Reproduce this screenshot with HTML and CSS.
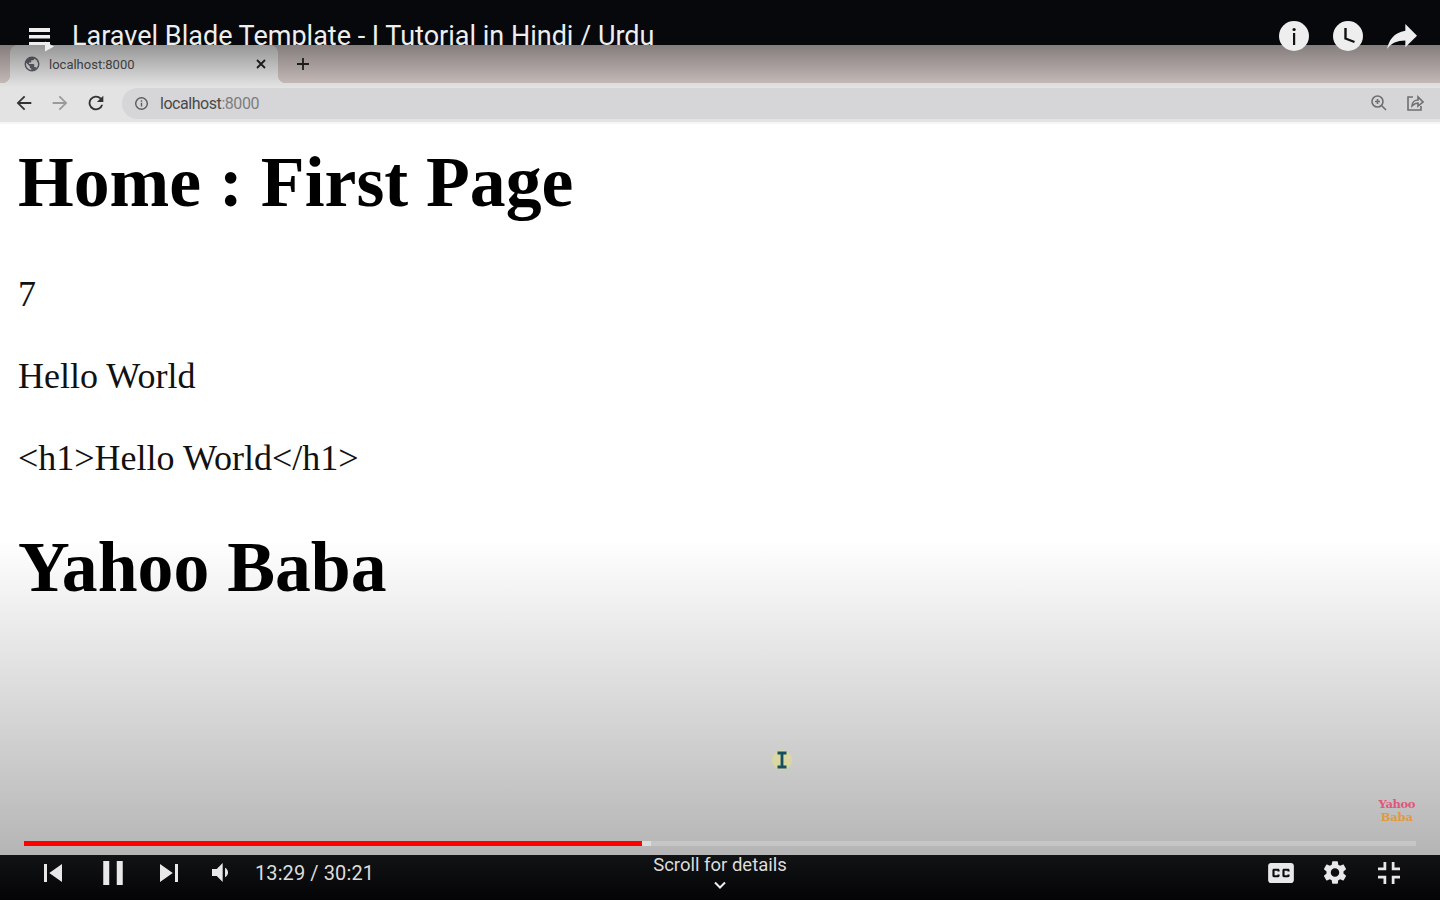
FILE: index.html
```html
<!DOCTYPE html>
<html lang="en">
<head>
    <meta charset="UTF-8">
    <meta name="viewport" content="width=device-width, initial-scale=1.0">
    <title>Laravel Blade Template</title>
    <link rel="stylesheet" href="styles.css">
</head>
<body>
    <header class="top-bar">
        <div class="video-title">Laravel Blade Template - I Tutorial in Hindi / Urdu</div>
    </header>

    <main class="video">
        <!-- browser window inside the video -->
        <div class="tab-strip">
            <div class="tab">
                <svg class="tab-globe" viewBox="0 0 24 24"><path d="M12 2a10 10 0 1 0 0 20 10 10 0 0 0 0-20zM11 19.900A8 8 0 0 1 4.200 10.200L9 15v1c0 1.100.9 2 2 2v1.900zm6.900-2.500c-.3-.8-1-1.400-1.900-1.400h-1v-3c0-.6-.4-1-1-1H8v-2h2c.6 0 1-.4 1-1V7h2c1.100 0 2-.9 2-2v-.4a8 8 0 0 1 2.900 12.800z"/></svg>
                <span class="tab-label">localhost:8000</span>
                <svg class="tab-close" viewBox="0 0 12 12"><path d="M2 2l8 8M10 2l-8 8"/></svg>
            </div>
            <svg class="tab-new" viewBox="0 0 14 14"><path d="M7 1v12M1 7h12"/></svg>
        </div>
        <div class="toolbar">
            <svg class="nav-icon" viewBox="0 0 24 24"><path d="M20 11H7.800l5.600-5.600L12 4l-8 8 8 8 1.400-1.400L7.800 13H20z"/></svg>
            <svg class="nav-icon nav-off" viewBox="0 0 24 24"><path d="M4 11h12.200l-5.600-5.600L12 4l8 8-8 8-1.400-1.400 5.600-5.600H4z"/></svg>
            <svg class="nav-icon" viewBox="0 0 24 24"><path d="M17.650 6.350A8 8 0 1 0 19.730 14h-2.080a6 6 0 1 1-1.410-6.240L13 11h7V4z"/></svg>
            <div class="address-bar">
                <svg class="address-info" viewBox="0 0 16 16"><circle cx="8" cy="8" r="6.200"/><path d="M8 7.200v4M8 4.600v1.400"/></svg>
                <span class="address-host">localhost<span class="address-port">:8000</span></span>
                <svg class="address-zoom" viewBox="0 0 18 18"><circle cx="7.500" cy="7.500" r="5.500"/><path d="M11.500 11.500L16 16M5 7.500h5M7.500 5v5"/></svg>
                <svg class="address-share" viewBox="0 0 18 18"><path d="M7 3H2v13h13v-4"/><path d="M6 12c0-4 3-6 6-6V3l5 5-5 4V9c-3 0-4 1-6 3z"/></svg>
            </div>
        </div>

        <div class="page">
            <h1>Home : First Page</h1>
            <p>7</p>
            <p>Hello World</p>
            <p>&lt;h1&gt;Hello World&lt;/h1&gt;</p>
            <h1>Yahoo Baba</h1>
        </div>

        <!-- player overlays -->
        <div class="shade-top"></div>
        <div class="shade-bottom"></div>

        <svg class="menu-icon" viewBox="0 0 25 24"><path d="M0 0h21v4H0zM0 7h21v3.500H0zM0 14h21v3H0z"/><path d="M16 13.500l9 5-9 5z"/></svg>
        <div class="top-actions">
            <svg class="top-icon" viewBox="0 0 30 30"><circle class="disc" cx="15" cy="15" r="15"/><path class="mark" d="M14 12h2.200v12H14z"/><circle class="mark" cx="15.100" cy="8.500" r="1.600"/></svg>
            <svg class="top-icon" viewBox="0 0 30 30"><circle class="disc" cx="15" cy="15" r="15"/><path class="hand" d="M12.500 7v10.500l9 3.500"/></svg>
            <svg class="top-share" viewBox="3 4 18 15"><path d="M21 11l-7-7v4C7 9 4 14 3 19c2.500-3.500 6-5.100 11-5.100V18l7-7z"/></svg>
        </div>

        <svg class="text-cursor" viewBox="0 0 20 20"><circle class="halo" cx="10" cy="10" r="10"/><path class="beam" d="M5.500 3h9M5.500 17h9M10 3v14"/></svg>

        <div class="watermark">
            <span class="mark-top">Yahoo</span>
            <span class="mark-bottom">Baba</span>
        </div>

        <div class="progress">
            <div class="progress-played"></div>
            <div class="progress-buffer"></div>
        </div>
    </main>

    <footer class="controls">
        <div class="controls-left">
            <svg class="ctl ctl-prev" viewBox="12 12 12 12"><path d="M12 12h2v12h-2zM15.500 18l8.500 6V12z"/></svg>
            <svg class="ctl ctl-pause" viewBox="12 10 13 16"><path d="M12 26h4V10h-4zM21 10v16h4V10z"/></svg>
            <svg class="ctl ctl-next" viewBox="12 12 12 12"><path d="M12 24l8.500-6L12 12zM22 12v12h2V12z"/></svg>
            <svg class="ctl ctl-volume" viewBox="8 10 13.500 16"><path d="M8 21h4l5 5V10l-5 5H8zM19 14v8c1.480-.68 2.500-2.230 2.500-4 0-1.740-1.020-3.260-2.500-4z"/></svg>
            <span class="time">13:29 / 30:21</span>
        </div>
        <div class="scroll-hint">
            <span>Scroll for details</span>
            <svg class="scroll-chevron" viewBox="0 0 12 8"><path d="M1 1.500l5 5 5-5"/></svg>
        </div>
        <div class="controls-right">
            <svg class="ctl ctl-cc" viewBox="9 11 18 14"><path fill-rule="evenodd" d="M11 11c-1.110 0-2 .9-2 2v10c0 1.100.89 2 2 2h14c1.100 0 2-.9 2-2V13c0-1.100-.9-2-2-2H11zm6 6h-1.500v-.5h-2v3h2V19H17v1c0 .55-.45 1-1 1h-3c-.55 0-1-.45-1-1v-4c0-.55.45-1 1-1h3c.55 0 1 .45 1 1v1zm7 0h-1.500v-.5h-2v3h2V19H24v1c0 .55-.45 1-1 1h-3c-.55 0-1-.45-1-1v-4c0-.55.45-1 1-1h3c.55 0 1 .45 1 1v1z"/></svg>
            <svg class="ctl ctl-gear" viewBox="2.700 2.400 18.600 19.200"><path fill-rule="evenodd" d="M19.140 12.940c.04-.3.06-.61.06-.94 0-.32-.02-.64-.07-.94l2.030-1.580c.18-.14.23-.41.12-.61l-1.920-3.320c-.12-.22-.37-.29-.59-.22l-2.390.96c-.5-.38-1.030-.7-1.620-.94L14.400 2.810c-.04-.24-.24-.41-.48-.41h-3.840c-.24 0-.43.17-.47.41L9.250 5.350c-.59.24-1.130.57-1.620.94L5.240 5.330c-.22-.08-.47 0-.59.22L2.740 8.870c-.12.21-.08.47.12.61l2.030 1.580c-.05.3-.09.63-.09.94s.02.64.07.94l-2.030 1.580c-.18.14-.23.41-.12.61l1.920 3.320c.12.22.37.29.59.22l2.390-.96c.5.38 1.030.7 1.620.94l.36 2.540c.05.24.24.41.48.41h3.840c.24 0 .44-.17.47-.41l.36-2.540c.59-.24 1.130-.56 1.620-.94l2.390.96c.22.08.47 0 .59-.22l1.920-3.320c.12-.22.07-.47-.12-.61l-2.010-1.580zM12 15.600c-1.980 0-3.600-1.620-3.600-3.600s1.620-3.600 3.600-3.600 3.600 1.620 3.600 3.600-1.620 3.600-3.600 3.600z"/></svg>
            <svg class="ctl ctl-exit" viewBox="10 10 16 16"><path d="M14 14h-4v2h6v-6h-2zM22 14v-4h-2v6h6v-2zM20 26h2v-4h4v-2h-6zM10 22h4v4h2v-6h-6z"/></svg>
        </div>
    </footer>
</body>
</html>
```

FILE: styles.css
```css
html, body {
    height: 100%;
}
body {
    margin: 0;
    display: flex;
    flex-direction: column;
    height: 900px;
    overflow: hidden;
    background-color: #000;
    font-family: Roboto, Arial, sans-serif;
}

/* top and bottom player bars */
.top-bar {
    height: 45px;
    flex: none;
    overflow: hidden;
    background-color: #06080c;
}
.video-title {
    margin: 18px 0 0 72px;
    font-size: 27px;
    line-height: 36px;
    color: #eee;
    white-space: nowrap;
}
.controls {
    position: relative;
    height: 45px;
    box-sizing: border-box;
    padding-bottom: 10px;
    flex: none;
    display: flex;
    align-items: center;
    justify-content: space-between;
    background: linear-gradient(#111315, #040406);
}
.controls-left, .controls-right {
    display: flex;
    align-items: center;
}
.controls-left {
    margin-left: 44px;
}
.controls-right {
    margin-right: 40px;
}
.ctl {
    display: block;
    fill: #e8e8e8;
}
.ctl-prev, .ctl-next {
    width: 18px;
    height: 18px;
}
.ctl-pause {
    width: 20px;
    height: 24px;
    margin-left: 41px;
}
.ctl-next {
    margin-left: 37px;
}
.ctl-volume {
    width: 18px;
    height: 19px;
    margin-left: 33px;
}
.time {
    margin-left: 26px;
    font-size: 20px;
    letter-spacing: 0.1px;
    color: #ddd;
}
.scroll-hint {
    position: absolute;
    left: 0;
    right: 0;
    top: 0;
    display: flex;
    flex-direction: column;
    align-items: center;
    font-size: 18.500px;
    line-height: 20px;
    color: #ddd;
}
.scroll-chevron {
    width: 12px;
    height: 8px;
    margin-top: 6px;
    fill: none;
    stroke: #eee;
    stroke-width: 2;
}
.ctl-cc {
    width: 26px;
    height: 20px;
}
.ctl-gear {
    width: 22px;
    height: 23px;
    margin-left: 30px;
}
.ctl-exit {
    width: 22px;
    height: 22px;
    margin-left: 32px;
}

/* video area */
.video {
    position: relative;
    flex: 1;
    background-color: #fff;
}
.tab-strip {
    height: 38px;
    display: flex;
    align-items: flex-end;
    background-color: #c9bebc;
}
.tab {
    position: relative;
    width: 268px;
    height: 38px;
    margin-left: 10px;
    display: flex;
    align-items: center;
    box-sizing: border-box;
    padding: 0 11px 0 13px;
    border-radius: 8px 8px 0 0;
    background-color: #e3e3e3;
}
.tab::before, .tab::after {
    content: "";
    position: absolute;
    bottom: 0;
    width: 8px;
    height: 8px;
}
.tab::before {
    left: -8px;
    background: radial-gradient(circle at 0 0, transparent 8px, #e3e3e3 8.500px);
}
.tab::after {
    right: -8px;
    background: radial-gradient(circle at 100% 0, transparent 8px, #e3e3e3 8.500px);
}
.tab-globe {
    width: 18px;
    height: 18px;
    fill: #5f6368;
}
.tab-label {
    margin-left: 8px;
    flex: 1;
    font-size: 13px;
    color: #4c4c4c;
}
.tab-close {
    width: 12px;
    height: 12px;
    fill: none;
    stroke: #222;
    stroke-width: 1.800;
}
.tab-new {
    width: 14px;
    height: 14px;
    margin: 0 0 12px 18px;
    fill: none;
    stroke: #222;
    stroke-width: 1.800;
}
.toolbar {
    height: 41px;
    box-sizing: border-box;
    padding: 5px 0 4px 13px;
    display: flex;
    align-items: center;
    background-color: #e3e3e3;
    border-bottom: 2px solid #f6f6f6;
}
.nav-icon {
    width: 22px;
    height: 22px;
    margin-right: 14px;
    fill: #333;
}
.nav-off {
    fill: #9a9a9a;
}
.address-bar {
    flex: 1;
    height: 31px;
    margin-left: 1px;
    display: flex;
    align-items: center;
    padding: 0 16px 0 12px;
    border-radius: 16px 0 0 16px;
    background-color: #d6d6d8;
}
.address-info {
    width: 15px;
    height: 15px;
    fill: none;
    stroke: #5c5c5c;
    stroke-width: 1.500;
}
.address-host {
    margin-left: 11px;
    flex: 1;
    font-size: 16px;
    letter-spacing: -0.45px;
    color: #4a4a4a;
}
.address-port {
    color: #7e7e7e;
}
.address-zoom, .address-share {
    width: 18px;
    height: 18px;
    fill: none;
    stroke: #6f6f6f;
    stroke-width: 1.600;
}
.address-share {
    margin-left: 18px;
}

/* what is shown in the browser */
.page {
    padding: 0 18px;
    font-family: "Liberation Serif", "Times New Roman", serif;
    color: #000;
}
.page h1 {
    margin: 0;
    padding-top: 19px;
    font-size: 71.700px;
    line-height: 78px;
}
.page p {
    margin: 41px 0 0;
    font-size: 36px;
    line-height: 41px;
    color: #111;
}
.page p:first-of-type {
    margin-top: 53px;
}
.page p + h1 {
    padding-top: 49px;
}

.shade-top {
    position: absolute;
    left: 0;
    right: 0;
    top: 0;
    height: 42px;
    background: linear-gradient(rgba(0, 0, 0, 0.34), rgba(0, 0, 0, 0));
}
.shade-bottom {
    position: absolute;
    left: 0;
    right: 0;
    bottom: 0;
    height: 315px;
    background: linear-gradient(rgba(0, 0, 0, 0), rgba(0, 0, 0, 0.29));
}
.menu-icon {
    position: absolute;
    left: 29px;
    top: -17px;
    width: 25px;
    height: 24px;
    fill: #eee;
}
.top-actions {
    position: absolute;
    right: 23px;
    top: -24px;
    display: flex;
    align-items: flex-start;
    gap: 24px;
}
.top-icon {
    display: block;
    width: 30px;
    height: 30px;
}
.top-share {
    display: block;
    width: 30px;
    height: 25px;
    margin-top: 3px;
    fill: #eee;
}
.disc {
    fill: #eee;
}
.mark {
    fill: #111;
}
.hand {
    fill: none;
    stroke: #111;
    stroke-width: 2.400;
}
.text-cursor {
    position: absolute;
    left: 772px;
    top: 705px;
    width: 20px;
    height: 20px;
}
.halo {
    fill: rgba(232, 226, 130, 0.55);
}
.beam {
    fill: none;
    stroke: #15505f;
    stroke-width: 2.800;
}
.watermark {
    position: absolute;
    right: 25px;
    bottom: 31px;
    display: flex;
    flex-direction: column;
    align-items: center;
    font-family: "DejaVu Serif", serif;
    font-weight: bold;
    font-size: 11.500px;
    line-height: 13px;
}
.mark-top {
    color: #e2567c;
    letter-spacing: -0.4px;
}
.mark-bottom {
    color: #e09a3c;
    letter-spacing: -0.2px;
}
.progress {
    position: absolute;
    left: 24px;
    right: 24px;
    bottom: 9px;
    height: 5px;
    display: flex;
    background-color: rgba(255, 255, 255, 0.2);
}
.progress-played {
    width: 618px;
    background-color: #f00;
}
.progress-buffer {
    width: 9px;
    background-color: #ddd;
}
```
